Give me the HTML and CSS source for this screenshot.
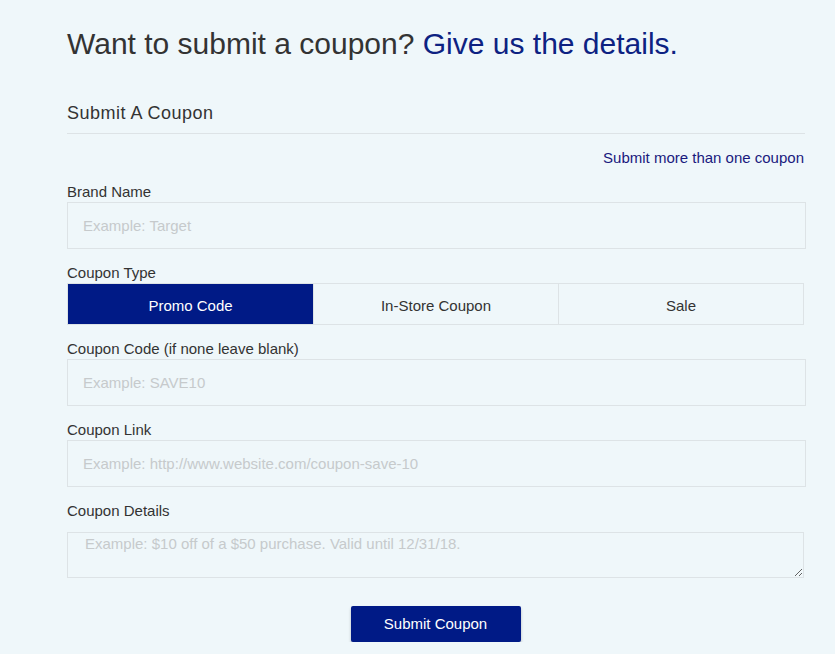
FILE: index.html
```html
<!DOCTYPE html>
<html>
<head>
<meta charset="utf-8">
<link rel="stylesheet" href="styles.css">
</head>
<body>
<main class="page">
  <h1 class="title">Want to submit a coupon? <span class="accent">Give us the details.</span></h1>
  <h2 class="section">Submit A Coupon</h2>
  <div class="more"><a href="#">Submit more than one coupon</a></div>
  <form class="form">
    <label class="label">Brand Name</label>
    <input class="field" type="text" placeholder="Example: Target">

    <label class="label">Coupon Type</label>
    <div class="types">
      <button type="button" class="type active">Promo Code</button>
      <button type="button" class="type">In-Store Coupon</button>
      <button type="button" class="type">Sale</button>
    </div>

    <label class="label">Coupon Code (if none leave blank)</label>
    <input class="field" type="text" placeholder="Example: SAVE10">

    <label class="label">Coupon Link</label>
    <input class="field" type="text" placeholder="Example: http://www.website.com/coupon-save-10">

    <label class="label label-details">Coupon Details</label>
    <textarea class="area" placeholder="Example: $10 off of a $50 purchase. Valid until 12/31/18."></textarea>

    <div class="actions">
      <button type="button" class="submit">Submit Coupon</button>
    </div>
  </form>
</main>
</body>
</html>
```

FILE: styles.css
```css
html, body {
  margin: 0;
  padding: 0;
  background: #eff7fa;
}
body {
  font-family: "Liberation Sans", Arial, sans-serif;
  color: #333;
}
.page {
  width: 738px;
  margin-left: 67px;
  padding-top: 24px;
}
.title {
  margin: 0;
  font-size: 30px;
  font-weight: normal;
  line-height: 40px;
  color: #333;
}
.accent {
  color: #0d2282;
}
.section {
  margin: 37px 0 0;
  font-size: 18px;
  font-weight: normal;
  line-height: 24px;
  padding-bottom: 8px;
  border-bottom: 1px solid #dde3e6;
  color: #333;
  letter-spacing: 0.5px;
}
.more {
  text-align: right;
  margin-top: 15px;
  margin-bottom: 16px;
  line-height: 18px;
  font-size: 15px;
  padding-right: 1px;
}
.more a {
  color: #1a1a7e;
  text-decoration: none;
}
.form {
  display: flex;
  flex-direction: column;
}
.label {
  font-size: 15px;
  line-height: 18px;
  margin: 0 0 1px;
  color: #333;
}
.field {
  box-sizing: border-box;
  height: 47px;
  width: 739px;
  border: 1px solid #dde3e6;
  background: #eff7fa;
  padding: 0 15px;
  font-family: "Liberation Sans", Arial, sans-serif;
  font-size: 15px;
  color: #333;
  margin: 0 0 15px;
}
.field::placeholder, .area::placeholder {
  color: #c6cacc;
}
.types {
  display: grid;
  grid-template-columns: 1fr 1fr 1fr;
  height: 42px;
  width: 737px;
  box-sizing: border-box;
  border: 1px solid #dde3e6;
  margin-bottom: 15px;
}
.type {
  border: 0;
  border-left: 1px solid #dde3e6;
  background: transparent;
  font-family: "Liberation Sans", Arial, sans-serif;
  font-size: 15px;
  color: #333;
  padding: 2px 0 0;
}
.type:first-child {
  border-left: 0;
}
.type.active {
  background: #001a86;
  color: #fff;
}
.label-details {
  margin-bottom: 12px;
}
.area {
  display: block;
  box-sizing: border-box;
  width: 737px;
  height: 46px;
  margin: 0;
  border: 1px solid #dde3e6;
  background: #eff7fa;
  padding: 2px 17px;
  font-family: "Liberation Sans", Arial, sans-serif;
  font-size: 15px;
  color: #333;
  resize: vertical;
}
.actions {
  display: flex;
  justify-content: center;
  margin-top: 28px;
  width: 737px;
}
.submit {
  width: 170px;
  height: 36px;
  background: #001a86;
  color: #fff;
  border: 0;
  border-radius: 2px;
  font-family: "Liberation Sans", Arial, sans-serif;
  font-size: 15px;
  padding: 0 0 2px;
  box-shadow: 0 2px 3px rgba(0,0,0,0.25);
}
```
